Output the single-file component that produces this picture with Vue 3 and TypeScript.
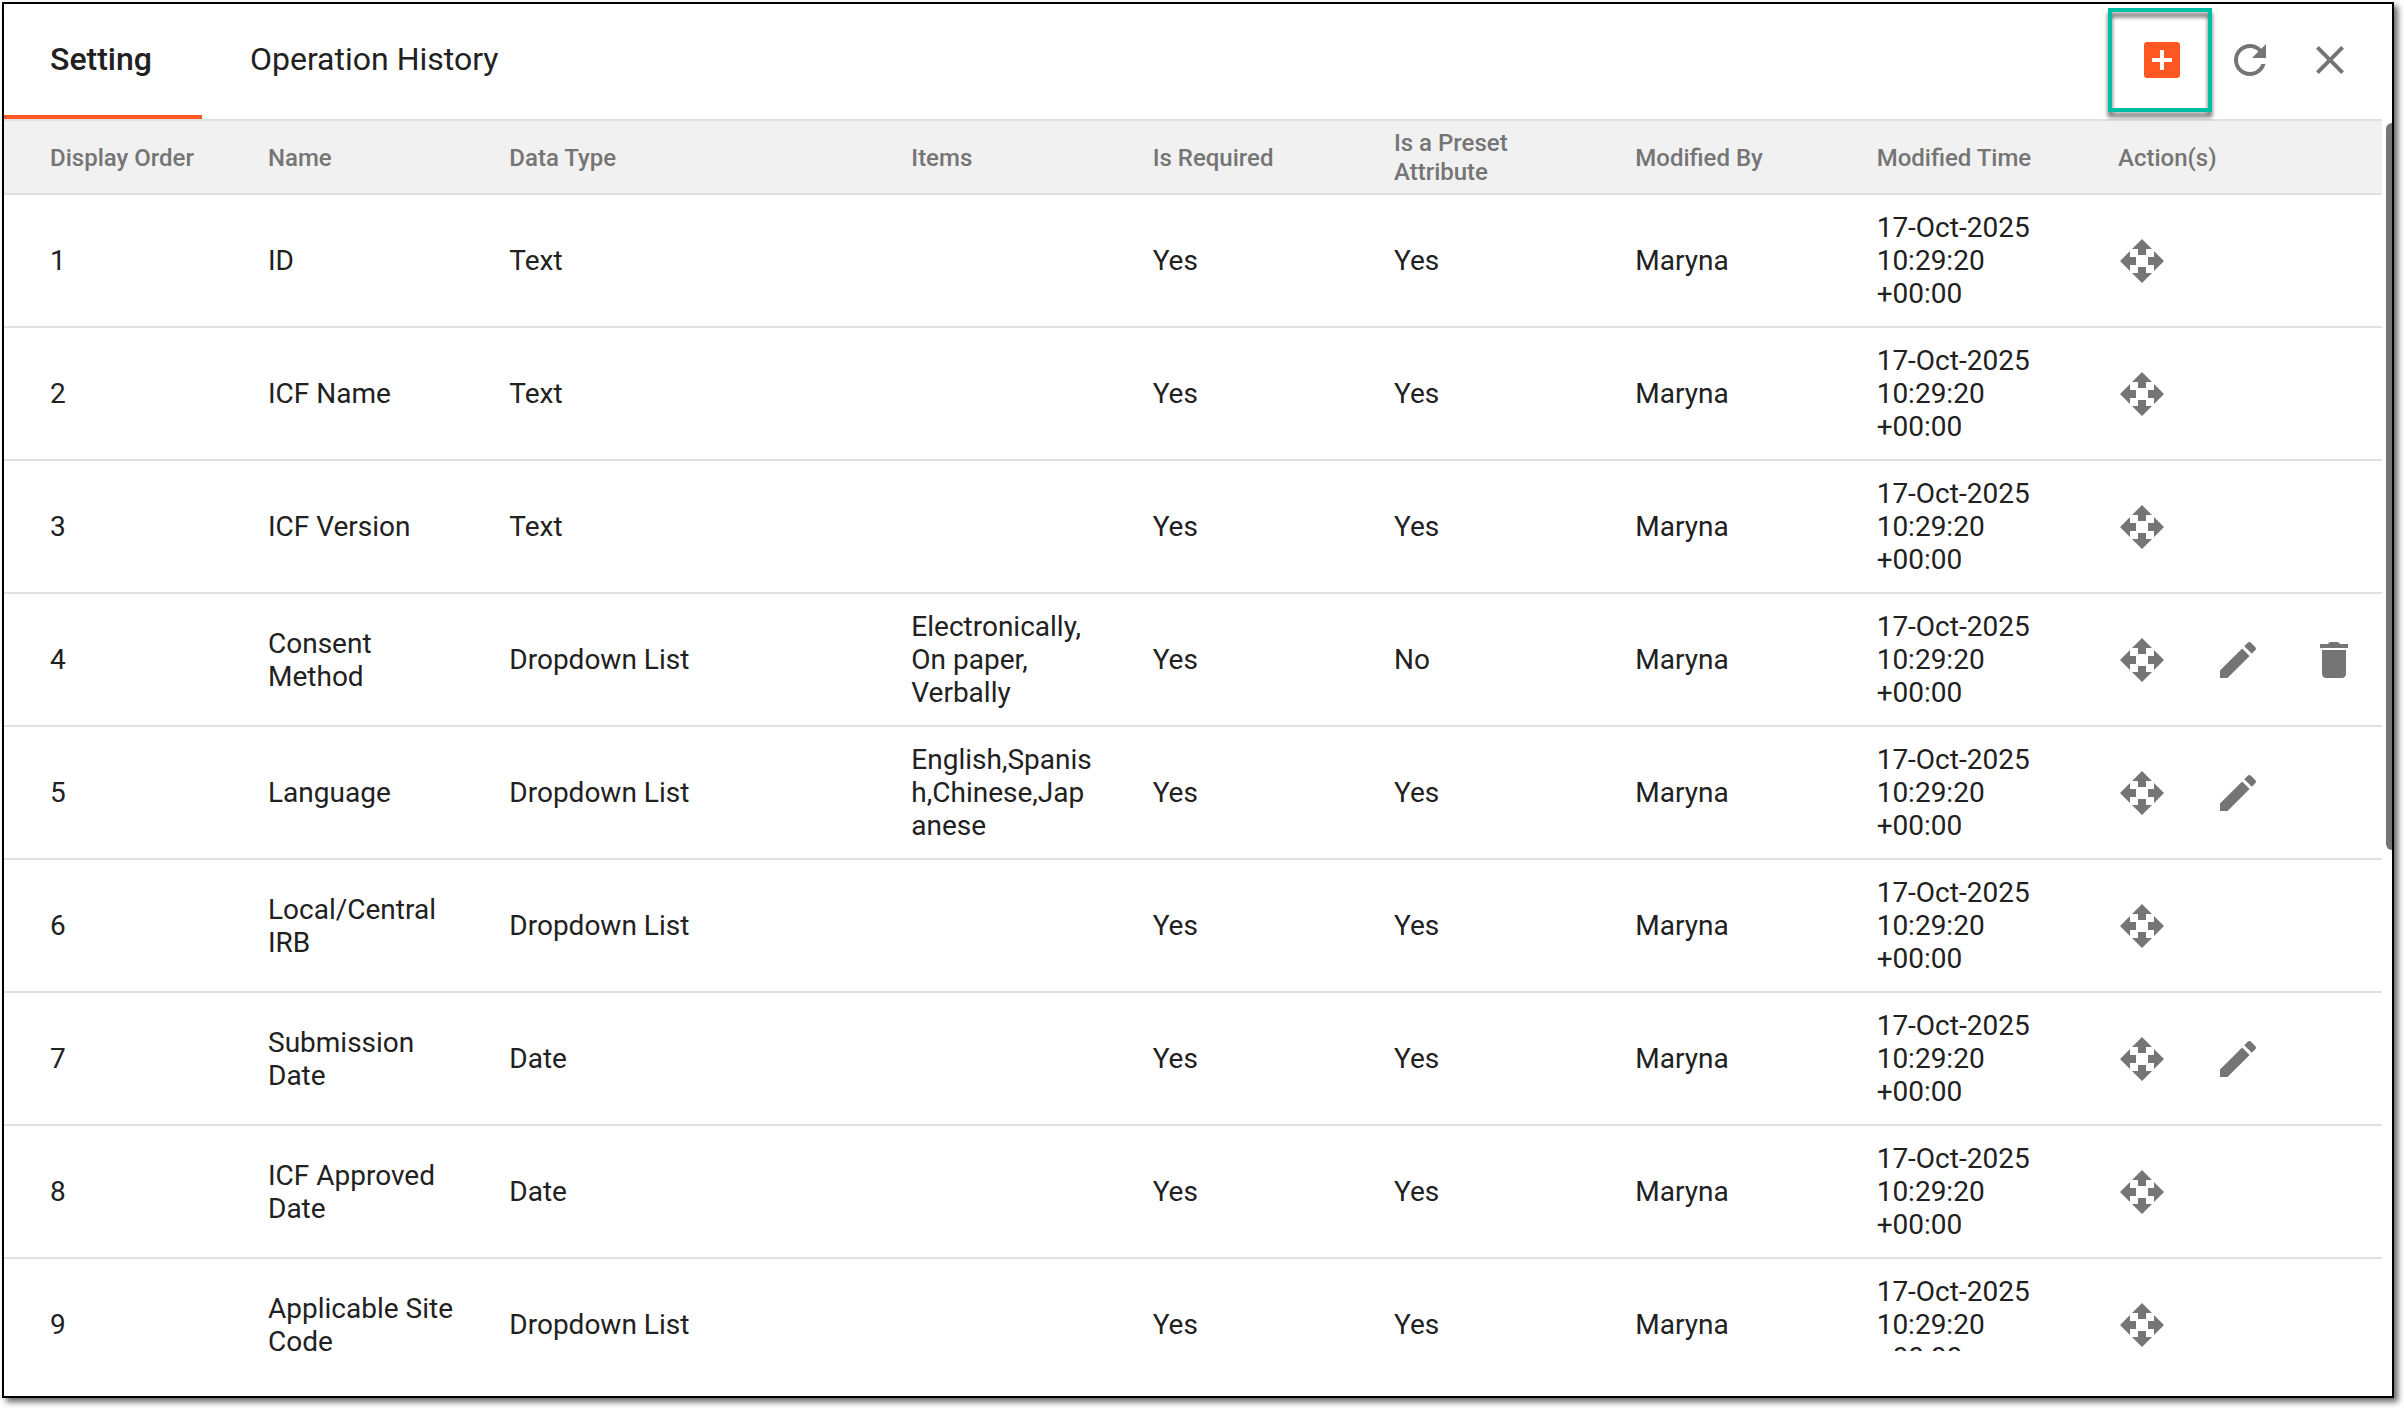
<script setup lang="ts">
import { ref } from 'vue'

type ActionName = 'move' | 'edit' | 'delete'

interface Attribute {
  order: number
  name: string
  dataType: string
  items: string
  required: string
  preset: string
  modifiedBy: string
  modifiedTime: string
  actions: ActionName[]
}

const tabs = ['Setting', 'Operation History']
const activeTab = ref('Setting')

const columns = [
  { label: 'Display Order', size: 'order' },
  { label: 'Name', size: 'auto' },
  { label: 'Data Type', size: 'type' },
  { label: 'Items', size: 'auto' },
  { label: 'Is Required', size: 'auto' },
  { label: 'Is a Preset Attribute', size: 'auto' },
  { label: 'Modified By', size: 'auto' },
  { label: 'Modified Time', size: 'auto' },
  { label: 'Action(s)', size: 'actions' },
]

const icons: Record<string, string> = {
  add: 'M19.4 3H4.6A1.6 1.6 0 0 0 3 4.6v14.8A1.6 1.6 0 0 0 4.6 21h14.8a1.6 1.6 0 0 0 1.6-1.6V4.6A1.6 1.6 0 0 0 19.4 3zM17 13h-4v4h-2v-4H7v-2h4V7h2v4h4v2z',
  refresh:
    'M17.65 6.35C16.2 4.9 14.21 4 12 4c-4.42 0-7.99 3.58-7.99 8s3.57 8 7.99 8c3.73 0 6.84-2.55 7.73-6h-2.08c-.82 2.33-3.04 4-5.65 4-3.31 0-6-2.69-6-6s2.69-6 6-6c1.66 0 3.14.69 4.22 1.78L13 11h7V4l-2.35 2.35z',
  close:
    'M19 6.41L17.59 5 12 10.59 6.41 5 5 6.41 10.59 12 5 17.59 6.41 19 12 13.41 17.59 19 19 17.59 13.41 12z',
  move: 'M10 9h4V6h3l-5-5-5 5h3v3zm-1 1H6V7l-5 5 5 5v-3h3v-4zm14 2l-5-5v3h-3v4h3v3l5-5zm-9 3h-4v3H7l5 5 5-5h-3v-3z',
  edit: 'M3 17.25V21h3.75L17.81 9.94l-3.75-3.75L3 17.25zM20.71 7.04c.39-.39.39-1.02 0-1.41l-2.34-2.34c-.39-.39-1.02-.39-1.41 0l-1.83 1.83 3.75 3.75 1.83-1.83z',
  delete:
    'M6 19c0 1.1.9 2 2 2h8c1.1 0 2-.9 2-2V7H6v12zM19 4h-4c-.2-.6-.8-1-1.5-1h-3c-.7 0-1.3.4-1.5 1H5v2h14V4z',
}

const stamp = '17-Oct-2025 10:29:20 +00:00'

function row(
  order: number,
  name: string,
  dataType: string,
  actions: ActionName[] = ['move'],
  items = '',
  preset = 'Yes',
): Attribute {
  return { order, name, dataType, items, required: 'Yes', preset, modifiedBy: 'Maryna', modifiedTime: stamp, actions }
}

const attributes: Attribute[] = [
  row(1, 'ID', 'Text'),
  row(2, 'ICF Name', 'Text'),
  row(3, 'ICF Version', 'Text'),
  row(4, 'Consent Method', 'Dropdown List', ['move', 'edit', 'delete'], 'Electronically, On paper, Verbally', 'No'),
  row(5, 'Language', 'Dropdown List', ['move', 'edit'], 'English,Spanish,Chinese,Japanese'),
  row(6, 'Local/Central IRB', 'Dropdown List'),
  row(7, 'Submission Date', 'Date', ['move', 'edit']),
  row(8, 'ICF Approved Date', 'Date'),
  row(9, 'Applicable Site Code', 'Dropdown List'),
]
</script>

<template>
  <main class="panel">
    <header class="bar">
      <nav class="tabs" role="tablist">
        <button
          v-for="tab in tabs"
          :key="tab"
          type="button"
          role="tab"
          class="tab"
          :class="{ active: tab === activeTab }"
          :aria-selected="tab === activeTab"
          @click="activeTab = tab"
        >
          {{ tab }}
        </button>
      </nav>
      <div class="tools">
        <button type="button" class="icon-button add" aria-label="Add attribute">
          <svg viewBox="0 0 24 24" aria-hidden="true"><path :d="icons.add" /></svg>
        </button>
        <button type="button" class="icon-button" aria-label="Refresh">
          <svg viewBox="0 0 24 24" aria-hidden="true"><path :d="icons.refresh" /></svg>
        </button>
        <button type="button" class="icon-button close" aria-label="Close">
          <svg viewBox="0 0 24 24" aria-hidden="true"><path :d="icons.close" /></svg>
        </button>
      </div>
    </header>

    <section class="scroller">
      <table>
        <colgroup>
          <col v-for="c in columns" :key="c.label" :class="`col-${c.size}`" />
        </colgroup>
        <thead>
          <tr>
            <th v-for="c in columns" :key="c.label" scope="col">{{ c.label }}</th>
          </tr>
        </thead>
        <tbody>
          <tr v-for="a in attributes" :key="a.order">
            <td>{{ a.order }}</td>
            <td>{{ a.name }}</td>
            <td>{{ a.dataType }}</td>
            <td class="items">{{ a.items }}</td>
            <td>{{ a.required }}</td>
            <td>{{ a.preset }}</td>
            <td>{{ a.modifiedBy }}</td>
            <td>{{ a.modifiedTime }}</td>
            <td>
              <div class="actions">
                <button
                  v-for="action in a.actions"
                  :key="action"
                  type="button"
                  class="icon-button"
                  :aria-label="`${action} ${a.name}`"
                >
                  <svg viewBox="0 0 24 24" aria-hidden="true"><path :d="icons[action]" /></svg>
                </button>
              </div>
            </td>
          </tr>
        </tbody>
      </table>
      <div class="thumb"></div>
    </section>
  </main>
</template>

<style>
body {
  background: #fff;
}
</style>

<style scoped>
.panel {
  box-sizing: border-box;
  display: flex;
  flex-direction: column;
  height: calc(100vh - 12px);
  margin: 2px 10px 10px 2px;
  border: 2px solid #000;
  background: #fff;
  box-shadow: 4px 4px 6px rgba(0, 0, 0, 0.6);
  color: #212121;
  font-family: Roboto, sans-serif;
  font-size: 28px;
  line-height: 33px;
}

.bar {
  display: flex;
  flex: none;
  justify-content: space-between;
  height: 115px;
}

.tabs {
  display: flex;
}

button {
  padding: 0;
  border: 0;
  background: none;
  color: inherit;
  font: inherit;
  cursor: pointer;
}

.tab {
  box-sizing: border-box;
  padding: 0 50px 0 48px;
  border-bottom: 4px solid transparent;
  font-size: 32px;
}

.tab:first-child {
  padding-left: 46px;
}

.tab.active {
  border-bottom-color: #ff5722;
  font-weight: 500;
}

.tools {
  display: flex;
  align-items: center;
  gap: 40px;
  padding: 0 38px 4px 0;
}

.icon-button {
  position: relative;
  display: block;
  flex: none;
  width: 48px;
  height: 48px;
  color: #757575;
}

.icon-button svg {
  display: block;
  width: 100%;
  height: 100%;
  fill: currentColor;
}

.close {
  margin-left: -8px;
}

.add {
  color: #ff5722;
}

/* Callout frame around the add button */
.add::after {
  content: '';
  position: absolute;
  top: -28px;
  left: -30px;
  box-sizing: border-box;
  z-index: 1;
  width: 104px;
  height: 104px;
  border: 4px solid #00bfa5;
  filter: drop-shadow(0 5px 2px rgba(0, 0, 0, 0.6));
}

.scroller {
  position: relative;
  flex: 1;
  min-height: 0;
  margin-bottom: 45px;
  padding-right: 10px;
  overflow: hidden;
}

table {
  width: 100%;
  border-spacing: 0;
  table-layout: fixed;
}

.col-order {
  width: 240px;
}

.col-type {
  width: 402px;
}

.col-actions {
  width: 288px;
}

th,
td {
  padding: 16px 24px;
  border-bottom: 2px solid #e0e0e0;
  text-align: left;
  vertical-align: middle;
}

th {
  height: 70px;
  padding-top: 2px;
  padding-bottom: 0;
  border-top: 2px solid #e0e0e0;
  background: #f1f1f1;
  color: #757575;
  font-size: 24px;
  font-weight: 500;
  line-height: 29px;
}

th:first-child,
td:first-child {
  padding-left: 46px;
}

.items {
  padding-right: 32px;
  overflow-wrap: anywhere;
}

.actions {
  display: flex;
  gap: 48px;
}

.thumb {
  position: absolute;
  top: 4px;
  right: -6px;
  width: 12px;
  height: 59%;
  border-radius: 6px;
  background: #757575;
}
</style>
